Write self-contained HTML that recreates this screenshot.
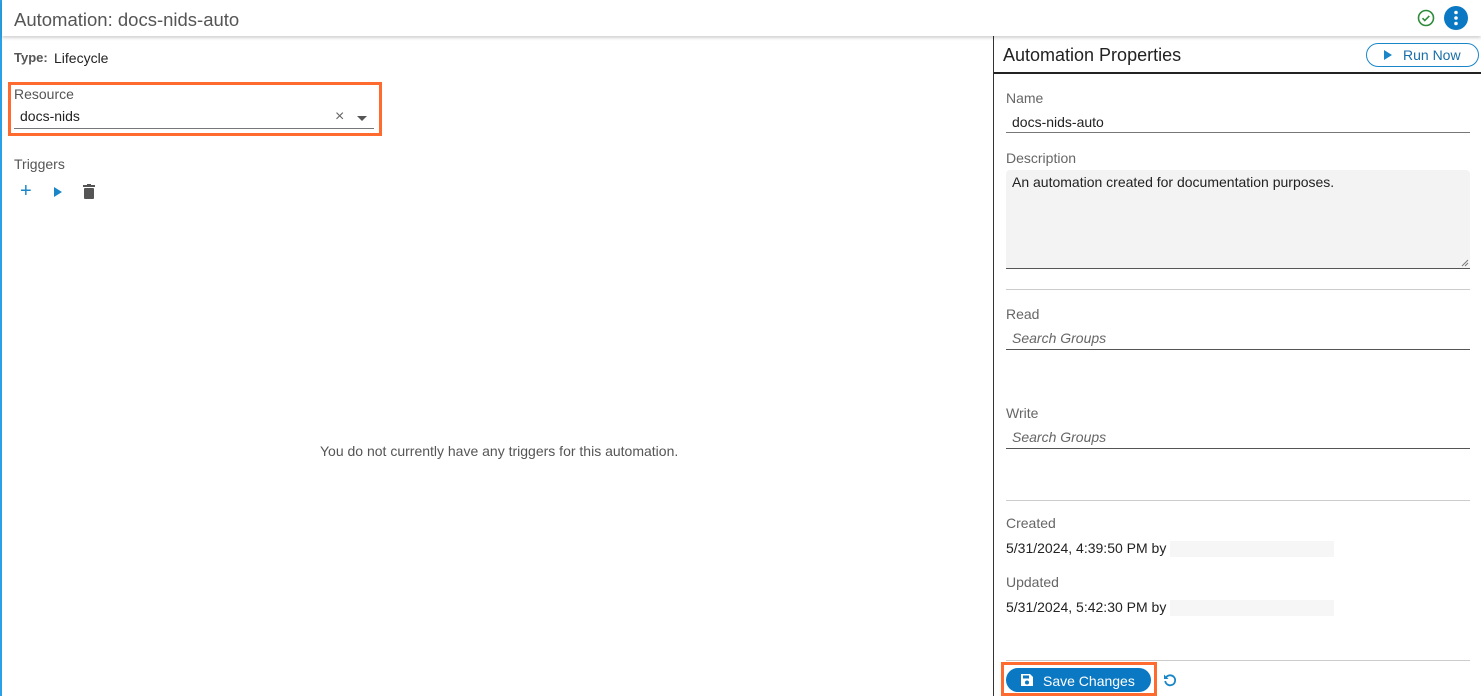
<!DOCTYPE html>
<html><head><style>
*{box-sizing:border-box;margin:0;padding:0}
body{width:1481px;height:696px;position:relative;overflow:hidden;background:#fff;font-family:"Liberation Sans",sans-serif;font-size:14px;color:#222}
.a{position:absolute;white-space:nowrap}
.lbl{color:#666;font-size:14px}
.line{position:absolute;height:1px;background:#555}
</style></head><body>
<div class="a" style="left:0;top:0;width:2px;height:696px;background:#2aa0e8"></div>
<div class="a" style="left:2px;top:0;width:1479px;height:36px;background:#fff;box-shadow:0 2px 3px rgba(0,0,0,0.18);z-index:2"></div>
<div class="a" style="left:14px;top:9px;font-size:18.5px;color:#555;z-index:3">Automation: docs-nids-auto</div>
<svg class="a" style="left:1417px;top:9px;z-index:3" width="18" height="18" viewBox="0 0 18 18"><circle cx="9" cy="9" r="7.5" fill="none" stroke="#2e8b3a" stroke-width="1.6"/><path d="M5.5 9.2l2.3 2.3 4.5-4.6" fill="none" stroke="#2e8b3a" stroke-width="1.6"/></svg>
<svg class="a" style="left:1444px;top:6px;z-index:3" width="24" height="24"><circle cx="12" cy="12" r="12" fill="#0a78c2"/><circle cx="12" cy="6.5" r="1.8" fill="#fff"/><circle cx="12" cy="12" r="1.8" fill="#fff"/><circle cx="12" cy="17.5" r="1.8" fill="#fff"/></svg>

<div class="a" style="left:14px;top:50px;color:#555;font-weight:bold;font-size:13px">Type:</div>
<div class="a" style="left:54px;top:50px;font-size:14px">Lifecycle</div>
<div class="a" style="left:8px;top:82px;width:374px;height:54px;border:3px solid #ff6a2f"></div>
<div class="a" style="left:14px;top:86px;color:#555;font-size:14px">Resource</div>
<div class="a" style="left:20px;top:108px;font-size:14px">docs-nids</div>
<div class="a" style="left:335px;top:108px;font-size:16px;color:#666">×</div>
<div class="a" style="left:357px;top:116px;width:0;height:0;border-left:5px solid transparent;border-right:5px solid transparent;border-top:5px solid #555"></div>
<div class="line" style="left:14px;top:128px;width:360px;background:#777"></div>
<div class="a" style="left:14px;top:156px;color:#555;font-size:14px">Triggers</div>
<div class="a" style="left:20px;top:181px;font-size:20px;color:#1a86c8;line-height:20px">+</div>
<div class="a" style="left:54px;top:187px;width:0;height:0;border-top:5px solid transparent;border-bottom:5px solid transparent;border-left:8px solid #1a86c8"></div>
<svg class="a" style="left:82px;top:184px" width="14" height="16"><rect x="1" y="1" width="12" height="2" fill="#555"/><rect x="5" y="0" width="4" height="2" fill="#555"/><rect x="2" y="4" width="10" height="11" rx="1" fill="#555"/></svg>
<div class="a" style="left:320px;top:443px;color:#555;font-size:14px">You do not currently have any triggers for this automation.</div>

<div class="a" style="left:993px;top:36px;width:1px;height:660px;background:#333"></div>
<div class="a" style="left:1003px;top:45px;font-size:18px;color:#222">Automation Properties</div>
<div class="a" style="left:1366px;top:43px;width:113px;height:24px;border:1px solid #1a86c8;border-radius:12px"></div>
<div class="a" style="left:1384px;top:50px;width:0;height:0;border-top:5px solid transparent;border-bottom:5px solid transparent;border-left:8px solid #1a86c8"></div>
<div class="a" style="left:1403px;top:47px;color:#1a6ea8;font-size:14px">Run Now</div>
<div class="a" style="left:994px;top:72px;width:487px;height:2px;background:#222"></div>

<div class="a lbl" style="left:1006px;top:90px">Name</div>
<div class="a" style="left:1012px;top:114px">docs-nids-auto</div>
<div class="line" style="left:1006px;top:132px;width:464px;background:#777"></div>
<div class="a lbl" style="left:1006px;top:150px">Description</div>
<div class="a" style="left:1006px;top:170px;width:464px;height:99px;background:#f3f3f3;border-radius:4px 4px 0 0;border-bottom:1px solid #555"></div>
<div class="a" style="left:1012px;top:174px">An automation created for documentation purposes.</div>
<svg class="a" style="left:1461px;top:259px" width="8" height="8"><path d="M1 7L7 1M4 7L7 4" stroke="#777" stroke-width="1"/></svg>
<div class="line" style="left:1006px;top:289px;width:464px;background:#ccc"></div>
<div class="a lbl" style="left:1006px;top:306px">Read</div>
<div class="a" style="left:1012px;top:330px;color:#666;font-style:italic">Search Groups</div>
<div class="line" style="left:1006px;top:349px;width:464px"></div>
<div class="a lbl" style="left:1006px;top:405px">Write</div>
<div class="a" style="left:1012px;top:429px;color:#666;font-style:italic">Search Groups</div>
<div class="line" style="left:1006px;top:448px;width:464px"></div>
<div class="line" style="left:1006px;top:500px;width:464px;background:#ccc"></div>
<div class="a lbl" style="left:1006px;top:515px">Created</div>
<div class="a" style="left:1006px;top:540px">5/31/2024, 4:39:50 PM by</div>
<div class="a" style="left:1170px;top:541px;width:164px;height:16px;background:#f6f6f6"></div>
<div class="a lbl" style="left:1006px;top:574px">Updated</div>
<div class="a" style="left:1006px;top:599px">5/31/2024, 5:42:30 PM by</div>
<div class="a" style="left:1170px;top:600px;width:164px;height:16px;background:#f6f6f6"></div>
<div class="line" style="left:1006px;top:660px;width:464px;background:#ccc"></div>
<div class="a" style="left:1001px;top:662px;width:156px;height:34px;border:3px solid #ff6a2f"></div>
<div class="a" style="left:1006px;top:668px;width:145px;height:24px;background:#0a78c2;border-radius:12px"></div>
<svg class="a" style="left:1020px;top:673px" width="14" height="14"><path d="M1 1h9l3 3v9H1z" fill="#fff"/><rect x="3" y="2.5" width="6" height="3" fill="#0a78c2"/><circle cx="7" cy="9.5" r="2" fill="#0a78c2"/></svg>
<div class="a" style="left:1043px;top:673px;color:#fff;font-size:14px">Save Changes</div>
<svg class="a" style="left:1163px;top:673px" width="14" height="14" viewBox="0 0 14 14"><path d="M3 4.5A5 5 0 1 1 2.2 8" fill="none" stroke="#1a86c8" stroke-width="1.8"/><path d="M1 1.5v4.5h4.5z" fill="#1a86c8"/></svg>
</body></html>
